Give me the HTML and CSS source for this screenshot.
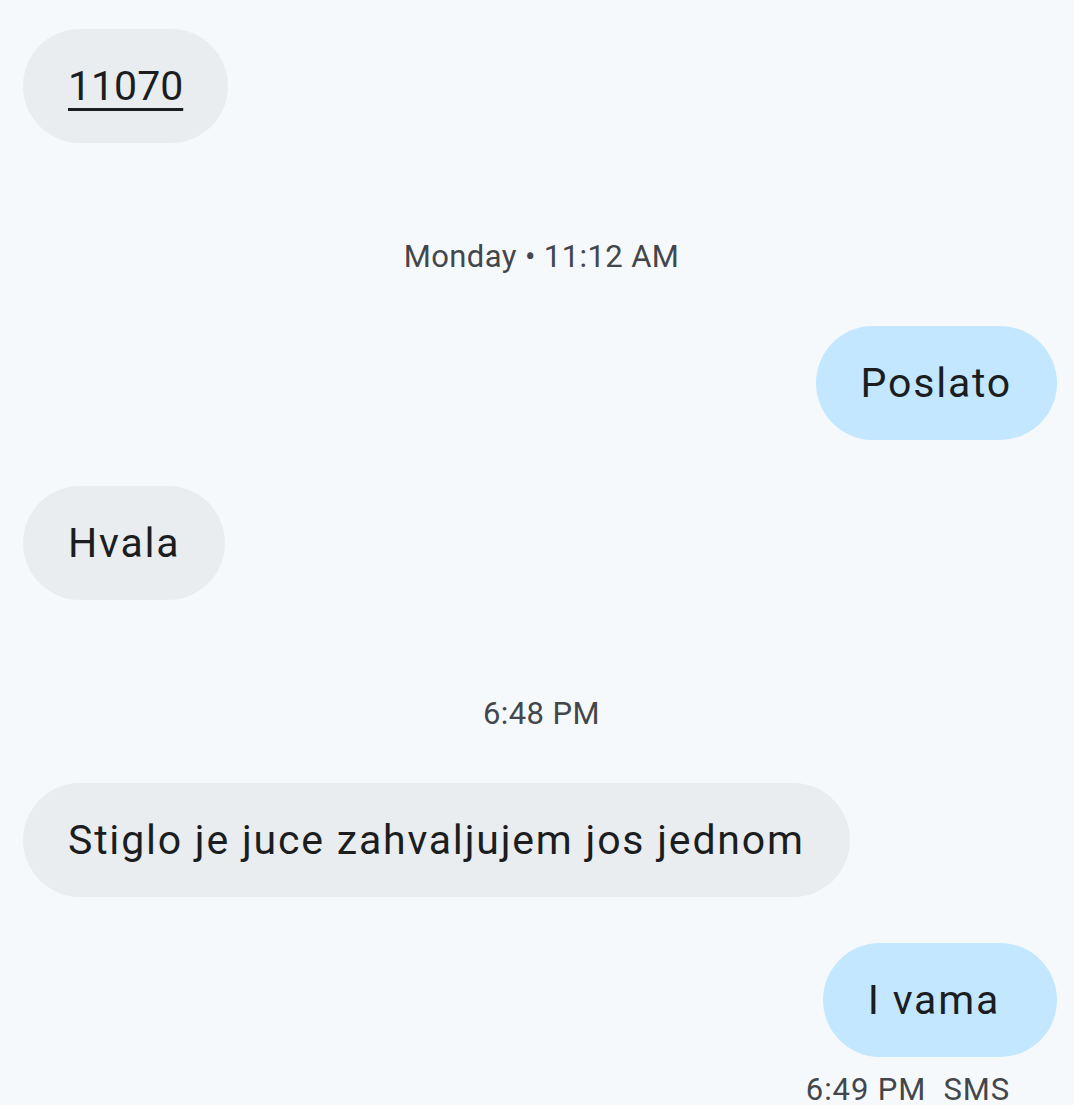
FILE: index.html
```html
<!DOCTYPE html>
<html>
<head>
<meta charset="utf-8">
<link rel="stylesheet" href="styles.css">
</head>
<body>
<div class="thread">
  <div class="row in"><div class="bubble recv"><span class="link">11070</span></div></div>
  <div class="stamp">Monday • 11:12 AM</div>
  <div class="row out"><div class="bubble sent">Poslato</div></div>
  <div class="row in gap"><div class="bubble recv">Hvala</div></div>
  <div class="stamp">6:48 PM</div>
  <div class="row in"><div class="bubble recv">Stiglo je juce zahvaljujem jos jednom</div></div>
  <div class="row out gap"><div class="bubble sent">I vama&nbsp;</div></div>
  <div class="meta">6:49 PM&nbsp;&nbsp;SMS</div>
</div>
</body>
</html>
```
FILE: styles.css
```css
html, body {
  margin: 0;
  padding: 0;
  background: #f6f9fc;
  font-family: Roboto, "Noto Sans", sans-serif;
  color: #1b1d1f;
  overflow: hidden;
}
.thread {
  display: flex;
  flex-direction: column;
  padding: 29px 17px 0 23px;
}
.row {
  display: flex;
}
.row.out {
  justify-content: flex-end;
}
.row.gap {
  margin-top: 46px;
}
.bubble {
  height: 114px;
  border-radius: 57px;
  padding: 0 45px;
  display: flex;
  align-items: center;
  font-size: 41px;
  letter-spacing: 1.8px;
  white-space: nowrap;
  box-sizing: border-box;
}
.recv {
  background: #e9edf0;
}
.sent {
  background: #c2e7ff;
}
.link {
  letter-spacing: 0;
  text-decoration: underline;
  text-decoration-thickness: 3px;
  text-underline-offset: 8px;
}
.stamp {
  text-align: center;
  font-size: 31px;
  line-height: 40px;
  letter-spacing: 0.4px;
  color: #43474b;
  margin: 94px 0 49px;
  padding-left: 3px;
}
.meta {
  text-align: right;
  font-size: 31px;
  line-height: 40px;
  letter-spacing: 0.9px;
  color: #43474b;
  margin-top: 13px;
  padding-right: 47px;
}
```
